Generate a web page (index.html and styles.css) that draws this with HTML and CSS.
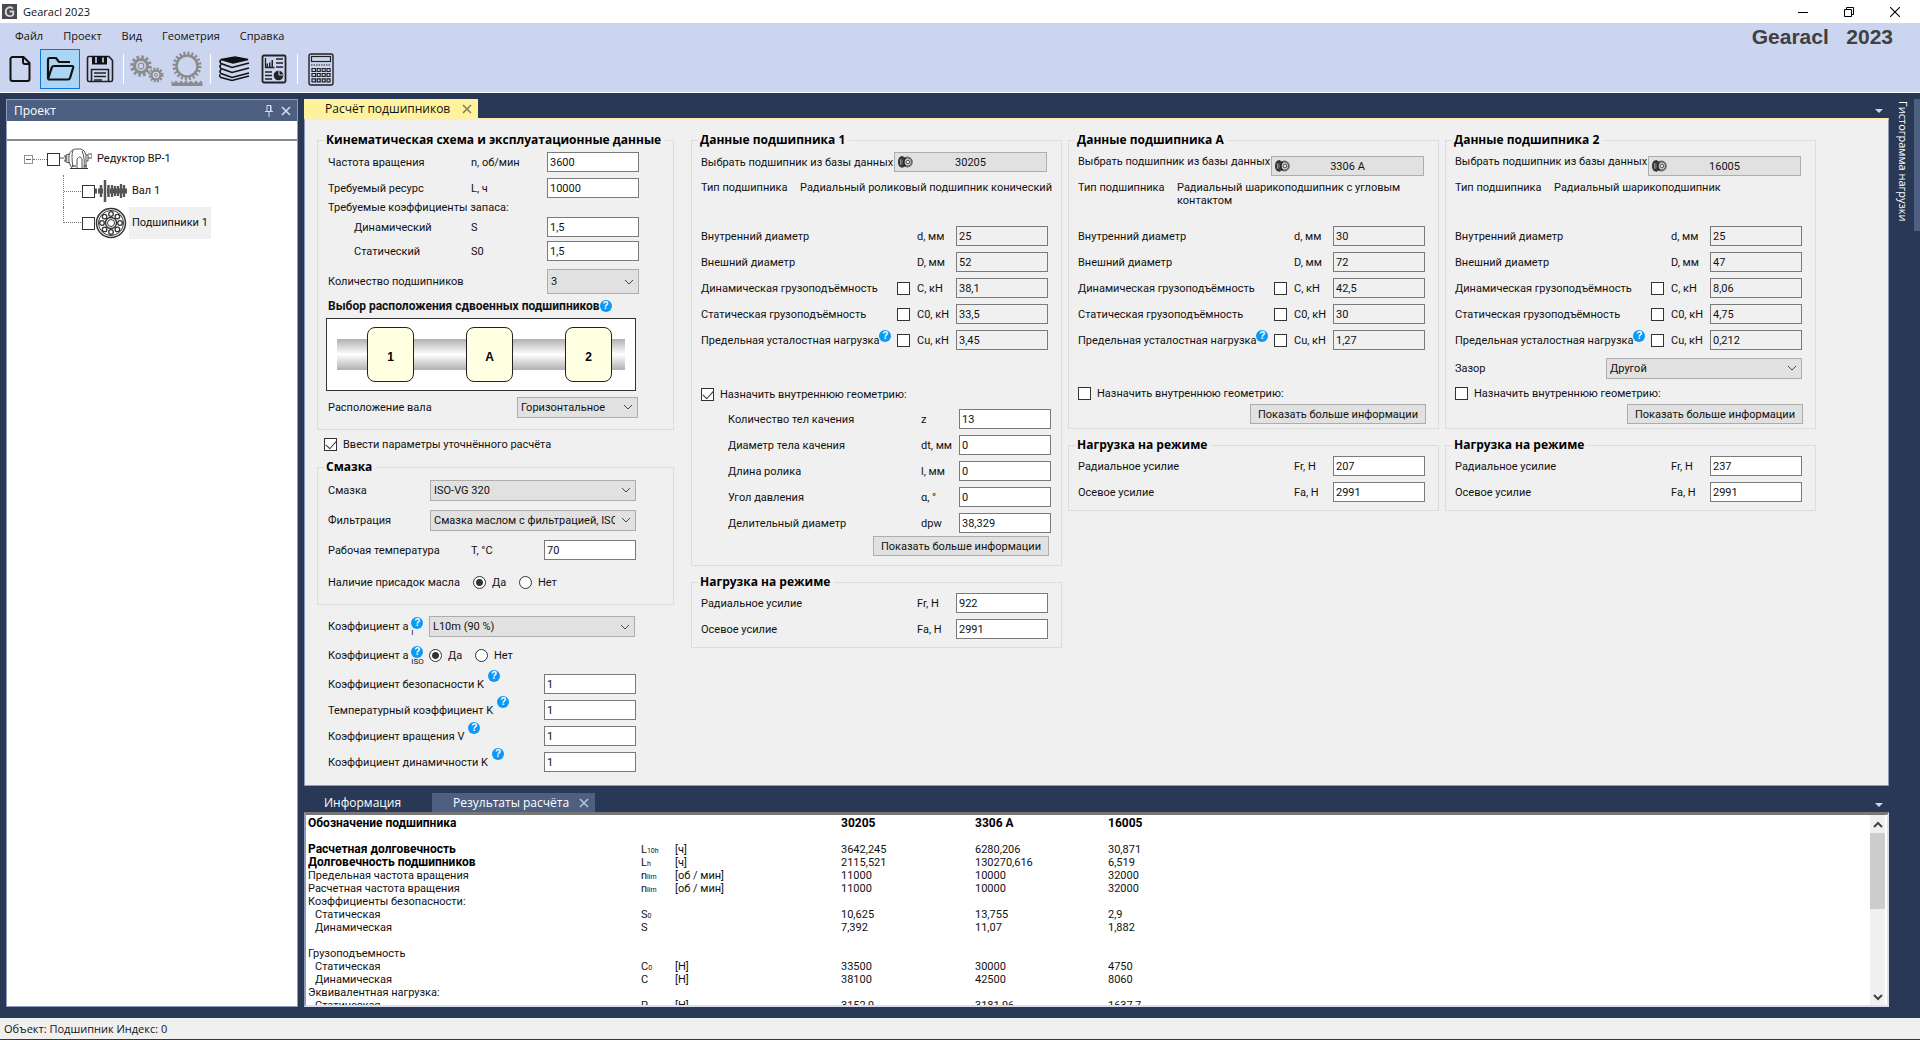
FILE: index.html
```html
<!DOCTYPE html>
<html lang="ru">
<head>
<meta charset="utf-8">
<title>Gearacl 2023</title>
<link rel="stylesheet" href="styles.css">
</head>
<body>
<svg class="defs" aria-hidden="true">
  <symbol id="i-close" viewBox="0 0 10 10"><path d="M1 1l8 8M9 1l-8 8" fill="none" stroke="currentColor" stroke-width="1.6"/></symbol>
  <symbol id="i-tri" viewBox="0 0 8 4"><path d="M0 0h8L4 4z" fill="currentColor"/></symbol>
  <symbol id="i-bearing" viewBox="0 0 16 14">
    <path d="M5 .5C1.500.5 0 3.500 0 7s1.500 6 5 6l1.500-1V2z" fill="#333"/>
    <path d="M3 4v6" stroke="#ccc" stroke-width="1"/>
    <circle cx="10" cy="7" r="4.800" fill="#ccc" stroke="#666" stroke-width="2"/>
    <path d="M8 2.500c-2.500 2-2.500 7 0 9" fill="none" stroke="#222" stroke-width="1.800"/>
    <circle cx="10.500" cy="7" r="1.900" fill="#eee" stroke="#444"/>
  </symbol>
</svg>

<header class="titlebar">
  <svg class="appicon" viewBox="0 0 16 16"><rect width="16" height="16" fill="#4a474e"/><path d="M11.500 5C10 2.500 4.500 2.800 4 8s6 6 8 3.500V8H8" fill="none" stroke="#d5d5d8" stroke-width="2"/></svg>
  <span class="apptitle">Gearacl 2023</span>
  <div class="winbtns">
    <button aria-label="Свернуть"><svg width="10" height="10" viewBox="0 0 10 10"><path d="M0 5.500h10" stroke="#000"/></svg></button>
    <button aria-label="Восстановить"><svg width="10" height="10" viewBox="0 0 10 10"><path d="M.5 2.500h7v7h-7zM2.500 2.500v-2h7v7h-2" fill="none" stroke="#000"/></svg></button>
    <button aria-label="Закрыть"><svg width="10" height="10" viewBox="0 0 10 10"><path d="M0 0l10 10M10 0L0 10" stroke="#000" stroke-width="1.100"/></svg></button>
  </div>
</header>

<div class="topbar">
  <div class="tools">
    <nav class="menu">
      <button>Файл</button><button>Проект</button><button>Вид</button><button>Геометрия</button><button>Справка</button>
    </nav>
    <div class="toolbar">
      <button aria-label="Новый"><svg width="22" height="28" viewBox="0 0 22 28"><path d="M3.500 2h11L20.500 8v16a2 2 0 0 1-2 2h-15a2 2 0 0 1-2-2V4a2 2 0 0 1 2-2zM14 2v5a2 2 0 0 0 2 2h4.500" fill="none" stroke="#111" stroke-width="2"/></svg></button>
      <button class="active" aria-label="Открыть"><svg width="30" height="26" viewBox="0 0 30 26"><path d="M3 22V4a2 2 0 0 1 2-2h6l3 4h11M3 23L7 11q.5-1 2-1h18q1.500 0 1.200 1.500L25 22q-.5 1.500-2 1.500H4.500Q3 23.500 3 22z" fill="none" stroke="#111" stroke-width="2.200"/></svg></button>
      <button aria-label="Сохранить"><svg width="28" height="28" viewBox="0 0 28 28"><path d="M3 1.500h20l3.500 4V25q0 1.500-1.500 1.500H3Q1.500 26.500 1.500 25V3Q1.500 1.500 3 1.500z" fill="none" stroke="#222" stroke-width="1.600"/><path d="M6 1h15v8.500H6z" fill="#111"/><path d="M10 2v6M17 2.500v5" stroke="#ccd5f0" stroke-width="1.600"/><path d="M5.500 26V14.500h17V26" fill="none" stroke="#222" stroke-width="1.600"/><path d="M8 18h12M8 21.500h12M8 25h8" stroke="#222" stroke-width="1.300"/></svg></button>
      <i class="sep"></i>
      <button aria-label="Передачи"><svg width="34" height="28" viewBox="0 0 34 28" fill="none" stroke="#8c8c8c"><circle cx="11" cy="11" r="9" stroke-width="3.500" stroke-dasharray="2.600 2.110"/><circle cx="11" cy="11" r="6.500" stroke-width="3"/><circle cx="11" cy="11" r="2.800" stroke-width="1.200"/><circle cx="26" cy="20" r="6.200" stroke-width="2.600" stroke-dasharray="1.900 1.350"/><circle cx="26" cy="20" r="4.400" stroke-width="2.200"/><circle cx="26" cy="20" r="1.500"/></svg></button>
      <button aria-label="Рейка"><svg width="32" height="36" viewBox="0 0 32 36" fill="none" stroke="#8c8c8c"><circle cx="16" cy="15" r="12.500" stroke-width="4" stroke-dasharray="2 1.927"/><circle cx="16" cy="15" r="10.500" stroke-width="2.500"/><path d="M.5 29.500l2 2.500 2.500-2.500 2.500 2.500 2.500-2.500 2.500 2.500 2.500-2.500 2.500 2.500 2.500-2.500 2.500 2.500 2.500-2.500 2.500 2.500 2.500-2.500 1.500 2.500V35H.5z" fill="#8c8c8c" stroke="none"/></svg></button>
      <i class="sep"></i>
      <button aria-label="База данных"><svg width="32" height="26" viewBox="0 0 32 26" fill="none" stroke="#111" stroke-width="1.600"><path d="M3 3.500L17 1l13 2.500L15 7z" fill="#111"/><path d="M3 3.500q-2 2 0 4l11 4 17-4.500M3 8.500q-2 2 0 4l11 4 17-4.500M3 13.500q-2 2 0 4l11 4 17-4.500M2 18.500q-1 2 1 3l11 3 17-4.500"/></svg></button>
      <button aria-label="Отчёт"><svg width="26" height="30" viewBox="0 0 26 30"><rect x="1.500" y="1.500" width="23" height="27" rx="1.500" fill="none" stroke="#222" stroke-width="1.800"/><path d="M5.500 13V9.500h1.500V13zM8 13V8.500h1.500V13zM10.500 13V6H12v7z" fill="#222"/><path d="M4.500 4v9.500h9M15 5h7M15 9h7M15 13h7M4 18h7M4 21.500h7M4 25h7" fill="none" stroke="#222" stroke-width="1.300"/><circle cx="17.500" cy="21.500" r="4.800" fill="#222"/><path d="M18 21V17M18 21h4" stroke="#ccd5f0"/></svg></button>
      <i class="sep"></i>
      <button aria-label="Калькулятор"><svg width="26" height="33" viewBox="0 0 26 33" fill="none" stroke="#222"><rect x="1" y="1" width="24" height="31" rx="2" stroke-width="1.400"/><rect x="3.500" y="3.500" width="19" height="5" stroke-width="1.200"/><path d="M3 12h20" stroke-dasharray="1.500 1" stroke-width="1.200"/><path d="M4 15.500h3.500v3H4zM9.200 15.500h3v3h-3zM14.200 15.500h3v3h-3zM19 15.500h3v3h-3zM4 20.500h3.500v3H4zM9.200 20.500h3v3h-3zM14.200 20.500h3v3h-3zM19 20.500h3v3h-3zM4 25.800h3.500v3H4zM9.200 25.800h3v3h-3zM14.200 25.800h3v3h-3zM19 25.800h3v3h-3z" stroke-width="1.200"/></svg></button>
    </div>
  </div>
  <div class="brand">Gearacl   2023</div>
</div>

<main class="workspace">
  <aside class="project">
    <div class="panelhead">
      <span>Проект</span>
      <button aria-label="Закрепить"><svg width="8" height="12" viewBox="0 0 8 12"><path d="M2 6V.5h4V6M0 6.500h8M4 6.500V12M5.500 1v5" fill="none" stroke="currentColor"/></svg></button>
      <button aria-label="Закрыть панель"><svg width="10" height="10"><use href="#i-close"/></svg></button>
    </div>
    <input class="search" type="text" aria-label="Поиск">
    <ul class="tree">
      <li>
        <span class="expander"></span><span class="dots"></span>
        <input type="checkbox" id="t0">
        <svg width="32" height="24" viewBox="0 0 32 24" fill="none" stroke="#555"><path d="M0 11h4M4 9h2v5H4M6 8l3-1v9l-3-1z" fill="#ddd"/><path d="M9 8q2-6 7-6h5q4 1 5 6v13M9 15q2 5 3 6M13 3q-2 6 0 17M17 21v-9q3-4 5 0v9M22 4q3 6 2 17"/><path d="M10 21.500h18M12 19h4M24 19h3" stroke="#333"/><path d="M26 8h2v6h-2M28 7h4v4h-4"/></svg>
        <label for="t0">Редуктор ВР-1</label>
      </li>
      <li class="child">
        <span class="branch"></span>
        <input type="checkbox" id="t1">
        <svg width="32" height="24" viewBox="0 0 32 24" stroke="#555"><path d="M0 12h32" stroke-width="5" stroke-dasharray="2 1"/><path d="M10 1v22M13.500 6v12M6 6v12" stroke-width="2.500"/><path d="M17 6v12M20 7v10M23 7v10M26 5v14M29 6v12" stroke-width="2.300"/></svg>
        <label for="t1">Вал 1</label>
      </li>
      <li class="child last">
        <span class="branch"></span>
        <input type="checkbox" id="t2">
        <svg width="32" height="32" viewBox="0 0 32 32" fill="none" stroke="#333"><circle cx="16" cy="16" r="14.500" stroke-width="1.500"/><circle cx="16" cy="16" r="12.500"/><circle cx="16" cy="16" r="5.500" stroke-width="1.400"/><circle cx="16" cy="16" r="3.500"/><g stroke-width="1.300"><circle cx="16" cy="7" r="2.300"/><circle cx="22.400" cy="9.600" r="2.300"/><circle cx="25" cy="16" r="2.300"/><circle cx="22.400" cy="22.400" r="2.300"/><circle cx="16" cy="25" r="2.300"/><circle cx="9.600" cy="22.400" r="2.300"/><circle cx="7" cy="16" r="2.300"/><circle cx="9.600" cy="9.600" r="2.300"/></g></svg>
        <label for="t2" class="selected">Подшипники 1</label>
      </li>
    </ul>
  </aside>

  <div class="center">
    <section class="document">
      <div class="tabs">
        <button class="tab doc">Расчёт подшипников <svg width="10" height="10"><use href="#i-close"/></svg></button>
        <svg class="tri" width="8" height="4"><use href="#i-tri"/></svg>
      </div>
      <form class="form">
        <div class="col first">
          <fieldset class="kin">
            <legend>Кинематическая схема и эксплуатационные данные</legend>
            <div class="row"><label for="n">Частота вращения</label><span>n, об/мин</span><input id="n" type="text" value="3600"></div>
            <div class="row"><label for="L">Требуемый ресурс</label><span>L, ч</span><input id="L" type="text" value="10000"></div>
            <div class="caption">Требуемые коэффициенты запаса:</div>
            <div class="row tight"><label class="in" for="s">Динамический</label><span>S</span><input id="s" type="text" value="1,5"></div>
            <div class="row tight"><label class="in" for="s0">Статический</label><span>S0</span><input id="s0" type="text" value="1,5"></div>
            <div class="row count"><label class="wide" for="cnt">Количество подшипников</label><select id="cnt" class="tall"><option>3</option></select></div>
            <div class="subhead">Выбор расположения сдвоенных подшипников<button type="button" class="help">?</button></div>
            <div class="shaft"><div class="bar"><b>1</b><b>A</b><b>2</b></div></div>
            <div class="orient"><label for="or">Расположение вала</label><select id="or"><option>Горизонтальное</option></select></div>
          </fieldset>
          <label class="check refine"><input type="checkbox" checked>Ввести параметры уточнённого расчёта</label>
          <fieldset class="oil">
            <legend>Смазка</legend>
            <div class="selrow"><label for="oil">Смазка</label><select id="oil"><option>ISO-VG 320</option></select></div>
            <div class="selrow"><label for="flt">Фильтрация</label><select id="flt"><option>Смазка маслом с фильтрацией, ISO 4406</option></select></div>
            <div class="row temp"><label for="tmp">Рабочая температура</label><span>T, °C</span><input id="tmp" type="text" value="70"></div>
            <div class="radios"><span>Наличие присадок масла</span><label><input type="radio" name="add" checked>Да</label><label><input type="radio" name="add">Нет</label></div>
          </fieldset>
          <div class="coefs">
            <div class="selrow"><label for="a1">Коэффициент a <span class="stack"><span class="help">?</span><small>I</small></span></label><select id="a1"><option>L10m (90 %)</option></select></div>
            <div class="radios iso"><span>Коэффициент a <span class="stack"><button type="button" class="help">?</button><small>ISO</small></span></span><label><input type="radio" name="iso" checked>Да</label><label><input type="radio" name="iso">Нет</label></div>
            <div class="row coef"><label for="k1">Коэффициент безопасности K<span class="help up">?</span></label><input id="k1" type="text" value="1"></div>
            <div class="row coef"><label for="k2">Температурный коэффициент K<span class="help up">?</span></label><input id="k2" type="text" value="1"></div>
            <div class="row coef"><label for="k3">Коэффициент вращения V<span class="help up">?</span></label><input id="k3" type="text" value="1"></div>
            <div class="row coef"><label for="k4">Коэффициент динамичности K<span class="help up">?</span></label><input id="k4" type="text" value="1"></div>
          </div>
        </div>

        <div class="col">
          <fieldset class="wideinfo">
            <legend>Данные подшипника 1</legend>
            <div class="pick"><label for="p1">Выбрать подшипник из базы данных</label><button type="button" id="p1"><svg width="15" height="14"><use href="#i-bearing"/></svg><span>30205</span></button></div>
            <div class="type"><span>Тип подшипника</span><span>Радиальный роликовый подшипник конический</span></div>
            <div class="data"><label for="d1">Внутренний диаметр</label><span></span><span>d, мм</span><input id="d1" type="text" value="25" readonly></div>
            <div class="data"><label for="D1">Внешний диаметр</label><span></span><span>D, мм</span><input id="D1" type="text" value="52" readonly></div>
            <div class="data"><label for="c1">Динамическая грузоподъёмность</label><input type="checkbox" aria-label="Задать C"><span>C, кН</span><input id="c1" type="text" value="38,1" readonly></div>
            <div class="data"><label for="co1">Статическая грузоподъёмность</label><input type="checkbox" aria-label="Задать C0"><span>C0, кН</span><input id="co1" type="text" value="33,5" readonly></div>
            <div class="data"><label for="cu1">Предельная усталостная нагрузка<span class="help mid">?</span></label><input type="checkbox" aria-label="Задать Cu"><span>Cu, кН</span><input id="cu1" type="text" value="3,45" readonly></div>
            <div class="gap"></div>
            <label class="check geo"><input type="checkbox" checked>Назначить внутреннюю геометрию:</label>
            <div class="data inner"><label for="z">Количество тел качения</label><span>z</span><input id="z" type="text" value="13"></div>
            <div class="data inner"><label for="dt">Диаметр тела качения</label><span>dt, мм</span><input id="dt" type="text" value="0"></div>
            <div class="data inner"><label for="l">Длина ролика</label><span>l, мм</span><input id="l" type="text" value="0"></div>
            <div class="data inner"><label for="al">Угол давления</label><span>α, °</span><input id="al" type="text" value="0"></div>
            <div class="data inner"><label for="dpw">Делительный диаметр</label><span>dpw</span><input id="dpw" type="text" value="38,329"></div>
            <button type="button" class="more">Показать больше информации</button>
          </fieldset>
          <fieldset class="load">
            <legend>Нагрузка на режиме</legend>
            <div class="data"><label for="fr1">Радиальное усилие</label><span></span><span>Fr, Н</span><input id="fr1" type="text" value="922"></div>
            <div class="data"><label for="fa1">Осевое усилие</label><span></span><span>Fa, Н</span><input id="fa1" type="text" value="2991"></div>
          </fieldset>
        </div>

        <div class="col">
          <fieldset>
            <legend>Данные подшипника A</legend>
            <div class="pick low"><label for="p2">Выбрать подшипник из базы данных</label><button type="button" id="p2"><svg width="15" height="14"><use href="#i-bearing"/></svg><span>3306 A</span></button></div>
            <div class="type"><span>Тип подшипника</span><span>Радиальный шарикоподшипник с угловым контактом</span></div>
            <div class="data"><label for="d2">Внутренний диаметр</label><span></span><span>d, мм</span><input id="d2" type="text" value="30" readonly></div>
            <div class="data"><label for="D2">Внешний диаметр</label><span></span><span>D, мм</span><input id="D2" type="text" value="72" readonly></div>
            <div class="data"><label for="c2">Динамическая грузоподъёмность</label><input type="checkbox" aria-label="Задать C"><span>C, кН</span><input id="c2" type="text" value="42,5" readonly></div>
            <div class="data"><label for="co2">Статическая грузоподъёмность</label><input type="checkbox" aria-label="Задать C0"><span>C0, кН</span><input id="co2" type="text" value="30" readonly></div>
            <div class="data"><label for="cu2">Предельная усталостная нагрузка<span class="help mid">?</span></label><input type="checkbox" aria-label="Задать Cu"><span>Cu, кН</span><input id="cu2" type="text" value="1,27" readonly></div>
            <div class="gap"></div>
            <label class="check geo"><input type="checkbox">Назначить внутреннюю геометрию:</label>
            <button type="button" class="more">Показать больше информации</button>
          </fieldset>
          <fieldset class="load">
            <legend>Нагрузка на режиме</legend>
            <div class="data"><label for="fr2">Радиальное усилие</label><span></span><span>Fr, Н</span><input id="fr2" type="text" value="207"></div>
            <div class="data"><label for="fa2">Осевое усилие</label><span></span><span>Fa, Н</span><input id="fa2" type="text" value="2991"></div>
          </fieldset>
        </div>

        <div class="col">
          <fieldset>
            <legend>Данные подшипника 2</legend>
            <div class="pick low"><label for="p3">Выбрать подшипник из базы данных</label><button type="button" id="p3"><svg width="15" height="14"><use href="#i-bearing"/></svg><span>16005</span></button></div>
            <div class="type"><span>Тип подшипника</span><span>Радиальный шарикоподшипник</span></div>
            <div class="data"><label for="d3">Внутренний диаметр</label><span></span><span>d, мм</span><input id="d3" type="text" value="25" readonly></div>
            <div class="data"><label for="D3">Внешний диаметр</label><span></span><span>D, мм</span><input id="D3" type="text" value="47" readonly></div>
            <div class="data"><label for="c3">Динамическая грузоподъёмность</label><input type="checkbox" aria-label="Задать C"><span>C, кН</span><input id="c3" type="text" value="8,06" readonly></div>
            <div class="data"><label for="co3">Статическая грузоподъёмность</label><input type="checkbox" aria-label="Задать C0"><span>C0, кН</span><input id="co3" type="text" value="4,75" readonly></div>
            <div class="data"><label for="cu3">Предельная усталостная нагрузка<span class="help mid">?</span></label><input type="checkbox" aria-label="Задать Cu"><span>Cu, кН</span><input id="cu3" type="text" value="0,212" readonly></div>
            <div class="gap"><label for="gap">Зазор</label><select id="gap"><option>Другой</option></select></div>
            <label class="check geo"><input type="checkbox">Назначить внутреннюю геометрию:</label>
            <button type="button" class="more">Показать больше информации</button>
          </fieldset>
          <fieldset class="load">
            <legend>Нагрузка на режиме</legend>
            <div class="data"><label for="fr3">Радиальное усилие</label><span></span><span>Fr, Н</span><input id="fr3" type="text" value="237"></div>
            <div class="data"><label for="fa3">Осевое усилие</label><span></span><span>Fa, Н</span><input id="fa3" type="text" value="2991"></div>
          </fieldset>
        </div>
      </form>
    </section>

    <section class="output">
      <div class="tabs">
        <button class="tab plain">Информация</button>
        <button class="tab tool">Результаты расчёта <svg width="10" height="10"><use href="#i-close"/></svg></button>
        <svg class="tri" width="8" height="4"><use href="#i-tri"/></svg>
      </div>
      <div class="results">
        <div class="tablewrap">
          <table>
            <colgroup><col class="c1"><col class="c2"><col class="c3"><col class="c4"><col class="c5"><col></colgroup>
            <tr class="strong"><th>Обозначение подшипника</th><td></td><td></td><td>30205</td><td>3306 A</td><td>16005</td></tr>
            <tr><td colspan="6"></td></tr>
            <tr><th>Расчетная долговечность</th><td>L<small>10h</small></td><td>[ч]</td><td>3642,245</td><td>6280,206</td><td>30,871</td></tr>
            <tr><th>Долговечность подшипников</th><td>L<small>h</small></td><td>[ч]</td><td>2115,521</td><td>130270,616</td><td>6,519</td></tr>
            <tr><td>Предельная частота вращения</td><td>n<small>lim</small></td><td>[об / мин]</td><td>11000</td><td>10000</td><td>32000</td></tr>
            <tr><td>Расчетная частота вращения</td><td>n<small>lim</small></td><td>[об / мин]</td><td>11000</td><td>10000</td><td>32000</td></tr>
            <tr><td>Коэффициенты безопасности:</td><td></td><td></td><td></td><td></td><td></td></tr>
            <tr><td class="ind">Статическая</td><td>S<small>0</small></td><td></td><td>10,625</td><td>13,755</td><td>2,9</td></tr>
            <tr><td class="ind">Динамическая</td><td>S</td><td></td><td>7,392</td><td>11,07</td><td>1,882</td></tr>
            <tr><td colspan="6"></td></tr>
            <tr><td>Грузоподъемность</td><td></td><td></td><td></td><td></td><td></td></tr>
            <tr><td class="ind">Статическая</td><td>C<small>0</small></td><td>[Н]</td><td>33500</td><td>30000</td><td>4750</td></tr>
            <tr><td class="ind">Динамическая</td><td>C</td><td>[Н]</td><td>38100</td><td>42500</td><td>8060</td></tr>
            <tr><td>Эквивалентная нагрузка:</td><td></td><td></td><td></td><td></td><td></td></tr>
            <tr><td class="ind">Статическая</td><td>P</td><td>[Н]</td><td>3152,9</td><td>3181,96</td><td>1637,7</td></tr>
          </table>
        </div>
        <div class="scroll">
          <svg width="15" height="18" viewBox="0 0 15 18"><path d="M4 12l4-4 4 4" fill="none" stroke="#444" stroke-width="2"/></svg>
          <i></i>
          <svg width="15" height="18" viewBox="0 0 15 18"><path d="M4 8l4 4 4-4" fill="none" stroke="#444" stroke-width="2"/></svg>
        </div>
      </div>
    </section>
  </div>

  <aside class="rail"><button>Гистограмма нагрузки</button><i></i></aside>
</main>
<footer class="status">Объект: Подшипник Индекс: 0</footer>
</body>
</html>
```
FILE: styles.css
```css
* { box-sizing: border-box; }
body {
  margin: 0; height: 100vh; display: grid; overflow: hidden;
  grid-template-rows: 23px 70px minmax(0, 1fr) 22px;
  background: #293955; color: #111;
  font: 12px/16px "Open Sans", "Noto Sans", sans-serif;
}
.defs { display: none; }
button, input, select { font: inherit; color: inherit; margin: 0; padding: 0; border: 0; background: none; }
svg { display: block; flex: none; }

.titlebar { display: flex; align-items: center; background: #fff; padding-left: 2px; font-size: 11px; }
.appicon { width: 15px; height: 15px; }
.apptitle { margin-left: 6px; }
.winbtns { margin-left: auto; display: flex; padding-right: 2px; }
.winbtns button { width: 46px; height: 21px; display: grid; place-items: center; }

.topbar { display: flex; justify-content: space-between; background: #ccd5f0; border-bottom: 1px solid #fff; }
.menu { display: flex; height: 26px; align-items: center; gap: 20px; padding-left: 15px; font-size: 11px; }
.toolbar { display: flex; align-items: center; height: 40px; padding-left: 4px; }
.toolbar button { width: 40px; height: 40px; display: grid; place-items: center; border: 1px solid transparent; }
.toolbar button:first-child { width: 32px; margin-right: 4px; }
.toolbar .active { border-color: #0a78d0; background: #aad5f4; }
.sep { width: 1px; height: 30px; background: #fff; margin: 0 3px; }
.brand { padding: 4px 27px 0 0; font: bold 21px/20px "Liberation Sans", sans-serif; color: #404040; white-space: pre; }

.workspace { display: grid; grid-template-columns: 292px minmax(0, 1fr) 31px; padding: 6px 0 11px 6px; }
.project { display: flex; flex-direction: column; background: #fff; border: 1px solid #8e9bbc; }
.panelhead { display: flex; align-items: center; gap: 8px; height: 21px; padding: 0 6px 0 7px; background: #4d6082; color: #fff; }
.panelhead span { flex: 1; }
.panelhead button { color: #d6dced; }
.search { height: 20px; background: #fff; border-bottom: 2px solid #8a8a8a; }
.tree { list-style: none; margin: 2px 0 0; padding: 0 0 0 17px; font: 11px/14px Roboto, "Liberation Sans", sans-serif; }
.tree li { display: flex; align-items: center; height: 32px; }
.tree label { padding: 0 3px; margin-left: 2px; line-height: 32px; }
.tree .selected { background: #f0f0f0; }
.expander { width: 9px; height: 9px; border: 1px solid #919191; background: linear-gradient(#4b63a7, #4b63a7) center/5px 1px no-repeat; }
.dots { width: 14px; border-top: 1px dotted #777; }
.child { padding-left: 39px; }
.branch { width: 19px; height: 32px; border-left: 1px dotted #777; background: repeating-linear-gradient(90deg, #777 0 1px, transparent 1px 2px) 0 16px/100% 1px no-repeat; }
.last .branch { height: 16px; align-self: flex-start; background-position: 0 15px; }

input[type=checkbox] { appearance: none; flex: none; width: 13px; height: 13px; border: 1px solid #333; background: #fff; display: grid; place-items: center; }
input[type=checkbox]:checked::after { content: ""; width: 9px; height: 5px; border: solid #333; border-width: 0 0 1px 1px; transform: rotate(-48deg) translate(1px, -1px); }
input[type=radio] { appearance: none; flex: none; width: 13px; height: 13px; border: 1px solid #333; border-radius: 50%; background: #fff; }
input[type=radio]:checked { background: radial-gradient(circle, #333 3px, #fff 4px); }

.center { display: grid; grid-template-rows: minmax(0, 1fr) 214px; row-gap: 7px; padding-left: 6px; min-width: 0; }
.document, .output { display: flex; flex-direction: column; min-height: 0; min-width: 0; }
.tabs { display: flex; align-items: stretch; height: 19px; flex: none; }
.tab { display: flex; align-items: center; padding: 0 6px 0 21px; white-space: nowrap; }
.doc { background: #fff29d; color: #111; width: 174px; justify-content: space-between; }
.doc svg { color: #857f56; }
.plain { color: #fff; width: 128px; padding-left: 20px; }
.tool { background: #4d6082; color: #fff; width: 163px; justify-content: space-between; }
.tool svg { color: #b9c1d8; }
.tri { margin: 10px 6px 0 auto; color: #ccd5f0; }

.form {
  flex: 1; min-height: 0; display: flex; align-items: flex-start; gap: 6px; overflow: hidden;
  padding: 12px 0 0 12px; background: #f0f0f0; border: 1px solid #8e9bbc; border-top: 2px solid #ffeeb0;
  font: 11px/13px Roboto, "Liberation Sans", sans-serif;
}
.col { width: 371px; flex: none; }
.first { width: 357px; margin-right: 11px; }
fieldset { margin: 0 0 8px; padding: 1px 0 4px 9px; border: 1px solid #dcdcdc; min-width: 0; }
legend { font: bold 12px/16px "Open Sans", "Noto Sans", sans-serif; padding: 0 4px 0 2px; margin-left: -3px; color: #000; white-space: nowrap; }
.kin, .oil { padding-left: 10px; margin-bottom: 0; }
.kin legend, .oil legend { margin-left: -4px; }
.kin { padding-bottom: 6px; }
.oil { padding-top: 0; }
.wideinfo { padding-bottom: 9px; }
.form label, .form span { white-space: nowrap; }

input[type=text] { height: 20px; min-width: 0; }
.form input[type=text] { width: 92px; border: 1px solid #7a7a7a; background: #fff; padding: 0 2px; }
.form input[readonly] { background: #f0f0f0; }
select {
  appearance: none; height: 21px; border: 1px solid #adadad; padding: 0 20px 0 3px; overflow: hidden;
  background: #e1e1e1 url("data:image/svg+xml,%3Csvg xmlns='http://www.w3.org/2000/svg' width='10' height='6'%3E%3Cpath d='M1 1l4 4 4-4' fill='none' stroke='%23444'/%3E%3C/svg%3E") right 4px center no-repeat;
}
.row { display: grid; grid-template-columns: 143px 76px 92px; align-items: center; height: 26px; }
.tight { height: 24px; }
.in { padding-left: 26px; }
.caption { height: 14px; }
.count { height: 37px; }
.wide { grid-column: span 2; }
.tall { height: 25px; }
.subhead { display: flex; height: 18px; font-size: 12px; font-weight: bold; white-space: nowrap; }
.help {
  display: inline-block; width: 12px; height: 12px; border-radius: 50%; background: #0a99f5; color: #fff;
  font: bold 10px/12px "Liberation Sans", sans-serif; text-align: center; flex: none;
}
.shaft { display: grid; width: 310px; height: 73px; margin-left: -2px; border: 1px solid #333; background: #fff; align-content: center; padding: 0 10px; }
.bar { display: flex; align-items: center; justify-content: space-between; height: 31px; padding: 0 13px 0 30px; background: linear-gradient(#b0b0b0, #fff 50%, #b0b0b0); }
.bar b { width: 47px; height: 55px; border: 1px solid #222; border-radius: 8px; background: #ffffe1; text-align: center; font: bold 12px/58px "Liberation Sans", sans-serif; color: #000; }
.orient { display: flex; justify-content: space-between; align-items: center; height: 32px; width: 310px; }
.orient select { width: 121px; }
.check { display: flex; align-items: center; }
.refine { height: 29px; padding-left: 7px; gap: 6px; }
.selrow { display: grid; grid-template-columns: 102px 206px; align-items: center; height: 30px; }
.temp { grid-template-columns: 143px 73px 92px; height: 30px; }
.radios { display: grid; grid-template-columns: 145px 46px 60px; align-items: center; height: 34px; }
.radios label { display: flex; align-items: center; gap: 6px; }
.oil .radios { height: 35px; }
.coefs { padding: 7px 0 0 11px; }
.coefs .selrow { height: 29px; grid-template-columns: 101px 206px; }
.iso { grid-template-columns: 101px 46px 60px; height: 29px; }
.stack { display: inline-flex; flex-direction: column; align-items: flex-start; vertical-align: middle; }
.stack small { font-size: 8px; line-height: 8px; }
.coef { grid-template-columns: 216px 92px; }
.coef label, .data label { display: flex; align-items: center; }
.up { margin: 0 0 16px 4px; }
.mid { margin: 0 0 8px 0; }

.pick { display: flex; align-items: center; justify-content: space-between; height: 26px; padding-right: 14px; }
.pick button { display: grid; grid-template-columns: 15px 1fr 15px; align-items: center; width: 153px; height: 20px; padding: 0 3px; background: #e1e1e1; border: 1px solid #adadad; }
.pick.low { align-items: flex-start; }
.pick.low label { line-height: 26px; }
.pick.low button { margin-top: 7px; }
.type { display: grid; grid-template-columns: 99px 1fr; height: 48px; padding-top: 6px; }
.type span:last-child { white-space: normal; }
.data { display: grid; grid-template-columns: 196px 20px 39px 92px; align-items: center; height: 26px; }
.inner { grid-template-columns: 193px 38px 92px; padding-left: 27px; }
.gap { display: flex; align-items: center; justify-content: space-between; height: 30px; padding-right: 13px; }
.gap select { width: 196px; }
.geo { height: 21px; gap: 6px; }
.wideinfo .geo { height: 23px; }
.more { display: block; width: 176px; height: 20px; margin: 0 12px 0 auto; background: #e1e1e1; border: 1px solid #adadad; }
.load { padding: 0 0 5px 9px; }

.results { flex: 1; min-height: 0; display: flex; background: #fff; border: 2px solid #d9dfee; border-top: 3px solid #777; border-left-color: #8e9bbc; }
.tablewrap { flex: 1; overflow: hidden; padding: 2px 0 0 2px; }
table { border-collapse: collapse; table-layout: fixed; width: 100%; font: 11px/13px Roboto, "Liberation Sans", sans-serif; }
.c1 { width: 333px; } .c2 { width: 34px; } .c3 { width: 166px; } .c4 { width: 134px; } .c5 { width: 133px; }
td, th { height: 13px; padding: 0; text-align: left; white-space: nowrap; }
th, .strong td { font-size: 12px; font-weight: bold; color: #000; }
td small { font-size: 7px; line-height: 7px; }
.ind { padding-left: 7px; }
.scroll { width: 15px; display: flex; flex-direction: column; background: #f0f0f0; margin-right: 2px; }
.scroll i { height: 76px; background: #cdcdcd; margin-bottom: auto; }

.rail { display: flex; justify-content: space-between; align-items: flex-start; padding-left: 6px; color: #fff; font-size: 11px; }
.rail button { writing-mode: vertical-rl; padding-top: 2px; }
.rail i { width: 6px; height: 132px; background: #4d6082; }
.status { background: #f0f0f0; border-bottom: 1px solid #293955; padding-left: 4px; line-height: 22px; font-size: 11px; }
```
